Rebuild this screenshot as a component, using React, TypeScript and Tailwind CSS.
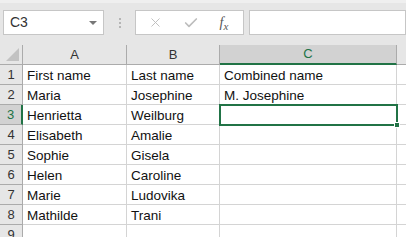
import { X, Check } from "lucide-react";

const cols = [
  { key: "A", w: "w-[104px]" },
  { key: "B", w: "w-[93px]" },
  { key: "C", w: "w-[177px]" },
  { key: "D", w: "w-[40px]" },
];

const data: string[][] = [
  ["First name", "Last name", "Combined name"],
  ["Maria", "Josephine", "M. Josephine"],
  ["Henrietta", "Weilburg", ""],
  ["Elisabeth", "Amalie", ""],
  ["Sophie", "Gisela", ""],
  ["Helen", "Caroline", ""],
  ["Marie", "Ludovika", ""],
  ["Mathilde", "Trani", ""],
  ["", "", ""],
];

export default function App() {
  return (
    <div
      className="w-[406px] h-[237px] overflow-hidden bg-[#e6e6e6] relative text-[#222]"
      style={{ fontFamily: '"Liberation Sans", Arial, sans-serif' }}
    >
      {/* formula bar */}
      <div className="h-[45px] flex items-start pt-[7px] pl-[3px] border-t-[3px] border-[#efefef]">
        <div className="w-[101px] h-[25px] shrink-0 bg-white border border-[#c6c6c6] flex items-center justify-between pl-[6px] pr-[6px]">
          <span className="text-[14px] text-[#333]">C3</span>
          <span className="w-0 h-0 border-l-[4px] border-r-[4px] border-t-[4px] border-l-transparent border-r-transparent border-t-[#777]" />
        </div>
        <div className="w-[31px] h-[25px] shrink-0 flex flex-col items-center justify-center gap-[2px]">
          <span className="w-[2px] h-[2px] bg-[#b5b5b5]" />
          <span className="w-[2px] h-[2px] bg-[#b5b5b5]" />
          <span className="w-[2px] h-[2px] bg-[#b5b5b5]" />
        </div>
        <div className="w-[109px] h-[25px] shrink-0 bg-white border border-[#c6c6c6] flex items-center">
          <div className="w-[38px] flex justify-center pl-[1px]">
            <X size={15} strokeWidth={1.5} color="#bdbdbd" />
          </div>
          <div className="w-[34px] flex justify-center">
            <Check size={16} strokeWidth={2.5} color="#bdbdbd" />
          </div>
          <div
            className="w-[32px] flex justify-center items-end text-[14px] italic text-[#555]"
            style={{ fontFamily: '"Liberation Serif", serif' }}
          >
            f<span className="text-[11px] leading-[14px]">x</span>
          </div>
        </div>
        <div className="ml-[5px] flex-1 h-[25px] bg-white border border-[#c6c6c6]" />
      </div>

      {/* column headers */}
      <div className="flex h-[20px] bg-[#e6e6e6]">
        <div className="w-[23px] shrink-0 h-full border-r border-b border-[#ababab] relative">
          <div className="absolute right-[3px] bottom-[3px] w-0 h-0 border-b-[13px] border-l-[13px] border-b-[#c2c2c2] border-l-transparent" />
        </div>
        {cols.map((c) => (
          <div
            key={c.key}
            className={
              c.key === "C"
                ? `${c.w} shrink-0 h-full bg-[#d2d2d2] border-r border-[#ababab] border-b-2 border-b-[#217346] flex items-center justify-center text-[13px] text-[#217346]`
                : `${c.w} shrink-0 h-full border-r border-b border-[#ababab] flex items-center justify-center text-[13px] text-[#333]`
            }
          >
            {c.key === "D" ? "" : c.key}
          </div>
        ))}
      </div>

      {/* rows */}
      <div className="bg-white">
        {data.map((row, i) => (
          <div key={i} className="flex h-[20px]">
            <div
              className={
                i === 2
                  ? "w-[23px] shrink-0 h-full bg-[#d2d2d2] border-r-2 border-r-[#217346] border-b border-b-[#ababab] flex items-center justify-center text-[13px] text-[#217346]"
                  : "w-[23px] shrink-0 h-full bg-[#e6e6e6] border-r border-b border-[#ababab] flex items-center justify-center text-[13px] text-[#333]"
              }
            >
              {i + 1}
            </div>
            {cols.map((c, j) => (
              <div
                key={c.key}
                className={`${c.w} shrink-0 h-full border-r border-b border-[#d4d4d4] pl-[4px] pt-[2px] text-[13.5px] leading-[18px] whitespace-nowrap overflow-hidden text-[#111]`}
              >
                {row[j] ?? ""}
              </div>
            ))}
          </div>
        ))}
      </div>

      {/* active cell */}
      <div className="absolute left-[219px] top-[104px] w-[179px] h-[22px] border-2 border-[#217346]" />
      <div className="absolute left-[394px] top-[122px] w-[6px] h-[6px] bg-[#217346] border border-white" />
    </div>
  );
}
